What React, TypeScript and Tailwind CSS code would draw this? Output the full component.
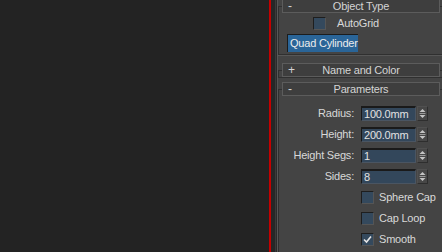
import React from "react";

const FONT = '"Liberation Sans", Arial, sans-serif';

function Header({ sign, title }: { sign: string; title: string }) {
  return (
    <div className="relative z-10 -mt-[8px] ml-[3px] mr-[2px] grid h-[14px] grid-cols-[18px_1fr_18px] items-center border border-[#5c5c5c] bg-[#3e3e3e] leading-none text-[#d4d4d4]">
      <span className="pl-[5px] text-[12px]">{sign}</span>
      <span className="text-center">{title}</span>
      <span />
    </div>
  );
}

function Spinner() {
  return (
    <div className="ml-[1px] h-[15px] w-[11px] border-b border-r border-t border-l border-b-[#2e2e2e] border-r-[#2e2e2e] border-t-[#505050] border-l-[#505050] bg-[#474747]">
      <svg width="9" height="13" viewBox="0 0 9 13" className="block">
        <polygon points="1.5,5 4.5,2 7.5,5" fill="#c4c4c4" />
        <line x1="1.5" y1="6.5" x2="7.5" y2="6.5" stroke="#9a9a9a" strokeWidth="1" />
        <polygon points="1.5,8 7.5,8 4.5,11" fill="#c4c4c4" />
      </svg>
    </div>
  );
}

function Field({ label, value }: { label: string; value: string }) {
  return (
    <div className="flex h-[15px] items-center">
      <span className="w-[75px] text-right">{label}</span>
      <div className="ml-[7px] flex h-[15px] w-[55px] items-center border-b border-l border-r border-t-2 border-b-[#4a5562] border-l-[#1a1a1a] border-r-[#4a5562] border-t-[#1a1a1a] bg-[#33475b] pl-[2px] text-[#e2e2e2]">
        {value}
      </div>
      <Spinner />
    </div>
  );
}

function Check({ checked }: { checked?: boolean }) {
  return (
    <div className="h-[13px] w-[13px] border-b border-l border-r border-t border-b-[#555555] border-l-[#1e1e1e] border-r-[#555555] border-t-[#1e1e1e] bg-[#34495d]">
      {checked && (
        <svg width="11" height="11" viewBox="0 0 11 11" className="block">
          <polyline points="2,5.5 4.5,8 9,2.5" fill="none" stroke="#e6e6e6" strokeWidth="1.6" />
        </svg>
      )}
    </div>
  );
}

function CheckRow({ label, checked }: { label: string; checked?: boolean }) {
  return (
    <div className="flex h-[15px] items-center">
      <div className="ml-[82px]">
        <Check checked={checked} />
      </div>
      <span className="ml-[5px]">{label}</span>
    </div>
  );
}

export default function App() {
  return (
    <div
      className="flex h-[252px] w-[442px] overflow-hidden bg-[#232323] text-[11px] leading-none tracking-[-0.2px] text-[#d8d8d8]"
      style={{ fontFamily: FONT }}
    >
      <div className="w-[269px] bg-[#232323]" />
      <div className="w-[2px] bg-[#c40000]" />
      <div className="w-[4px] bg-[#272727]" />
      <div className="w-[1px] bg-[#3a3a3a]" />
      <div className="w-[1px] bg-[#2b2b2b]" />
      <div className="w-[1px] bg-[#575757]" />
      <div className="flex w-[164px] flex-col bg-[#444444]">
        {/* Object Type */}
        <div className="mt-[6px] border-b border-l border-t border-[#303030] pb-[2px] shadow-[0_1px_0_#575757]">
          <Header sign="-" title="Object Type" />
          <div className="mt-[4px] flex h-[13px] items-center">
            <div className="ml-[34px]">
              <Check />
            </div>
            <span className="ml-[11px]">AutoGrid</span>
          </div>
          <div className="ml-[8px] mt-[4px] flex h-[18px] w-[71px] items-center border-l border-t border-[#1c1c1c] bg-[#2a6598] pl-[2px] text-[#ececec]">
            Quad Cylinder
          </div>
        </div>

        {/* Name and Color */}
        <div className="mt-[15px] border-b border-l border-t border-[#303030]">
          <Header sign="+" title="Name and Color" />
        </div>

        {/* Parameters */}
        <div className="mt-[11px] flex-1 border-l border-t border-[#303030]">
          <Header sign="-" title="Parameters" />
          <div className="mt-[10px] flex flex-col gap-[6px]">
            <Field label="Radius:" value="100.0mm" />
            <Field label="Height:" value="200.0mm" />
            <Field label="Height Segs:" value="1" />
            <Field label="Sides:" value="8" />
            <CheckRow label="Sphere Cap" />
            <CheckRow label="Cap Loop" />
            <CheckRow label="Smooth" checked />
          </div>
        </div>
      </div>
    </div>
  );
}
